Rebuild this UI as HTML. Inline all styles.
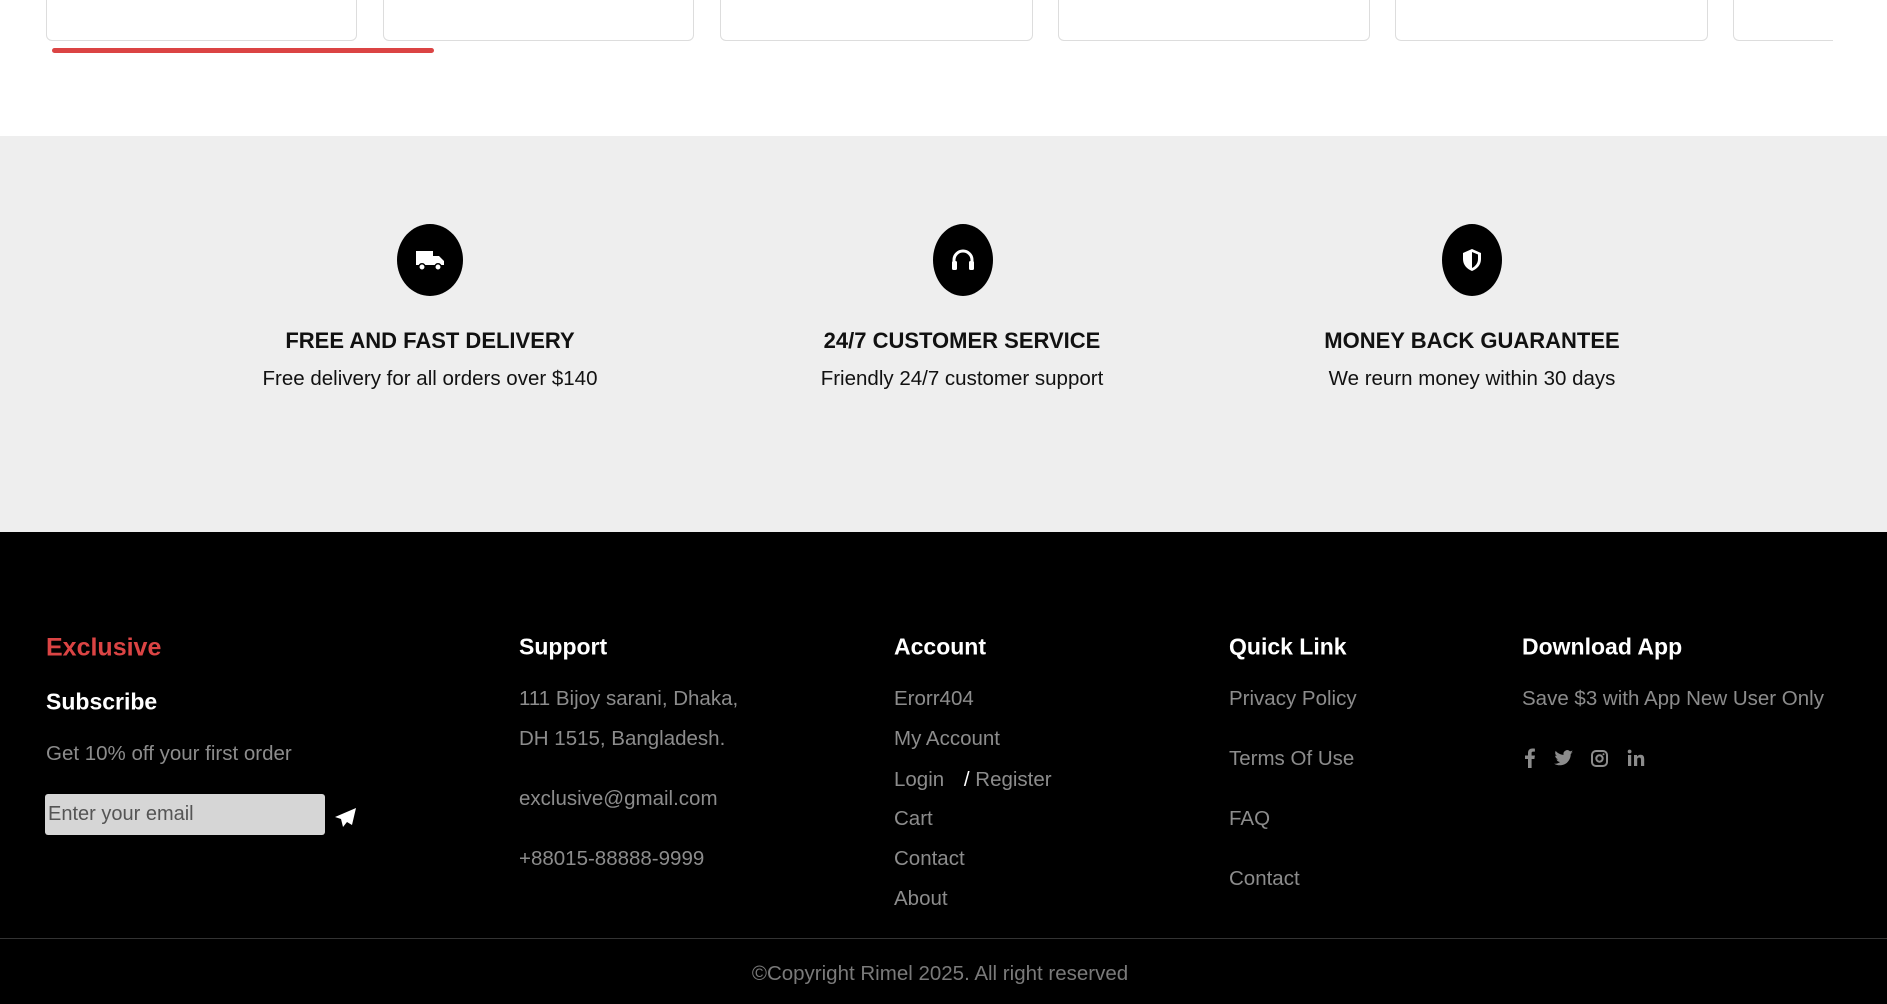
<!DOCTYPE html>
<html><head><meta charset="utf-8"><style>
*{margin:0;padding:0;box-sizing:border-box}
body{width:1887px;height:1004px;overflow:hidden;background:#fff;font-family:"Liberation Sans",sans-serif;position:relative}
.a{position:absolute;white-space:nowrap}
.card{position:absolute;top:-10px;height:51px;border:1px solid #ddd;border-radius:6px;background:#fff}
.gray{position:absolute;left:0;top:136px;width:1887px;height:396px;background:#eeeeee}
.ic{position:absolute;top:224px;height:72px;background:#000;border-radius:50%;display:flex;align-items:center;justify-content:center}
.t{position:absolute;top:328px;font-weight:bold;font-size:22px;color:#111;transform:translateX(-50%);white-space:nowrap}
.s{position:absolute;top:367px;font-size:20.5px;color:#111;transform:translateX(-50%);white-space:nowrap}
.foot{position:absolute;left:0;top:532px;width:1887px;height:472px;background:#000}
.h{font-size:23px;font-weight:bold;color:#fff;transform:translateY(-50%)}
.g{font-size:20.5px;color:#8c8c8c;transform:translateY(-50%)}
</style></head><body>
<div class="card" style="left:46px;width:311px"></div>
<div class="card" style="left:383px;width:311px"></div>
<div class="card" style="left:720px;width:313px"></div>
<div class="card" style="left:1058px;width:312px"></div>
<div class="card" style="left:1395px;width:313px"></div>
<div class="card" style="left:1733px;width:200px;border-right:none"></div>
<div style="position:absolute;left:1833px;top:0;width:60px;height:45px;background:#fff"></div>
<div style="position:absolute;left:52px;top:48px;width:382px;height:5px;background:#db4444;border-radius:3px"></div>

<div class="gray"></div>
<div class="ic" style="left:397px;width:66px"><svg width="32" height="26" viewBox="0 0 32 26"><path d="M2 4h17v14H2zM19 9h6l5 5v4H19z" fill="#fff"/><circle cx="8" cy="20" r="3.2" fill="#fff" stroke="#000" stroke-width="1.5"/><circle cx="24" cy="20" r="3.2" fill="#fff" stroke="#000" stroke-width="1.5"/></svg></div>
<div class="ic" style="left:933px;width:60px"><svg width="28" height="26" viewBox="0 0 28 26"><path d="M5 18v-5a9 9 0 0118 0v5" fill="none" stroke="#fff" stroke-width="3"/><rect x="3" y="14" width="5" height="9" rx="1.5" fill="#fff"/><rect x="20" y="14" width="5" height="9" rx="1.5" fill="#fff"/></svg></div>
<div class="ic" style="left:1442px;width:60px"><svg width="24" height="26" viewBox="0 0 24 26"><path d="M12 2l9 4v6c0 6-4 10-9 12-5-2-9-6-9-12V6z" fill="#fff"/><path d="M12 5v16c3-1.5 6-4.5 6-9V7.5z" fill="#000"/></svg></div>
<div class="t" style="left:430px">FREE AND FAST DELIVERY</div>
<div class="t" style="left:962px">24/7 CUSTOMER SERVICE</div>
<div class="t" style="left:1472px">MONEY BACK GUARANTEE</div>
<div class="s" style="left:430px">Free delivery for all orders over $140</div>
<div class="s" style="left:962px">Friendly 24/7 customer support</div>
<div class="s" style="left:1472px">We reurn money within 30 days</div>

<div class="foot"></div>
<div class="a h" style="left:46px;top:648px;color:#db4444;font-size:25px">Exclusive</div>
<div class="a h" style="left:46px;top:702px">Subscribe</div>
<div class="a g" style="left:46px;top:754px">Get 10% off your first order</div>
<div style="position:absolute;left:45px;top:794px;width:280px;height:41px;background:#d6d6d6;border-radius:3px;font-size:20px;color:#555;padding:9px 3px">Enter your email</div>
<svg class="a" style="left:334px;top:807px" width="24" height="22" viewBox="0 0 24 22"><path d="M22 1L1 10l6 2 2 8 4-5 5 3z" fill="#fff"/></svg>

<div class="a h" style="left:519px;top:647px">Support</div>
<div class="a g" style="left:519px;top:699px">111 Bijoy sarani, Dhaka,</div>
<div class="a g" style="left:519px;top:739px">DH 1515, Bangladesh.</div>
<div class="a g" style="left:519px;top:799px">exclusive@gmail.com</div>
<div class="a g" style="left:519px;top:859px">+88015-88888-9999</div>

<div class="a h" style="left:894px;top:647px">Account</div>
<div class="a g" style="left:894px;top:699px">Erorr404</div>
<div class="a g" style="left:894px;top:739px">My Account</div>
<div class="a g" style="left:894px;top:780px">Login <span style="color:#fff;margin-left:14px">/</span> Register</div>
<div class="a g" style="left:894px;top:819px">Cart</div>
<div class="a g" style="left:894px;top:859px">Contact</div>
<div class="a g" style="left:894px;top:899px">About</div>

<div class="a h" style="left:1229px;top:647px">Quick Link</div>
<div class="a g" style="left:1229px;top:699px">Privacy Policy</div>
<div class="a g" style="left:1229px;top:759px">Terms Of Use</div>
<div class="a g" style="left:1229px;top:819px">FAQ</div>
<div class="a g" style="left:1229px;top:879px">Contact</div>

<div class="a h" style="left:1522px;top:647px">Download App</div>
<div class="a g" style="left:1522px;top:699px">Save $3 with App New User Only</div>
<svg class="a" style="left:1522px;top:747px" width="130" height="22" viewBox="0 0 130 22" fill="#8c8c8c">
<path d="M6 21V12H3V8.5h3V6c0-3 1.8-4.5 4.4-4.5 1.2 0 2.2.1 2.5.1v3h-1.7c-1.4 0-1.6.6-1.6 1.6v2.3h3.3l-.5 3.5H9.6v9z"/>
<g transform="translate(7,0)"><path d="M44 5c-.7.3-1.4.5-2.2.6.8-.5 1.4-1.2 1.7-2.1-.8.4-1.6.8-2.4.9a3.8 3.8 0 00-6.5 3.5c-3.2-.2-6-1.7-7.9-4-1 1.8-.5 4 1.2 5.1-.6 0-1.2-.2-1.7-.5 0 1.9 1.3 3.4 3 3.8-.6.2-1.2.2-1.7.1.5 1.5 1.9 2.6 3.6 2.6A7.7 7.7 0 0125 16.6c1.7 1.1 3.7 1.7 5.9 1.7 7 0 11-6 10.8-11.3.8-.6 1.5-1.3 2.1-2.1z"/></g>
<rect x="70" y="4" width="15" height="15" rx="4" fill="none" stroke="#8c8c8c" stroke-width="2"/><circle cx="77.5" cy="11.5" r="3.2" fill="none" stroke="#8c8c8c" stroke-width="2"/><circle cx="81.5" cy="7.2" r="1"/>
<rect x="106" y="8" width="3.2" height="11"/><circle cx="107.6" cy="4.5" r="1.9"/><path d="M112 8h3v1.6c.6-1 1.8-1.9 3.6-1.9 3 0 3.6 2 3.6 4.6V19h-3.2v-5.6c0-1.3 0-2.9-1.8-2.9s-2 1.4-2 2.8V19H112z"/>
</svg>

<div style="position:absolute;left:0;top:938px;width:1887px;height:1px;background:#333"></div>
<div class="a g" style="left:940px;top:974px;transform:translate(-50%,-50%);color:#7a7a7a">©Copyright Rimel 2025. All right reserved</div>
</body></html>
